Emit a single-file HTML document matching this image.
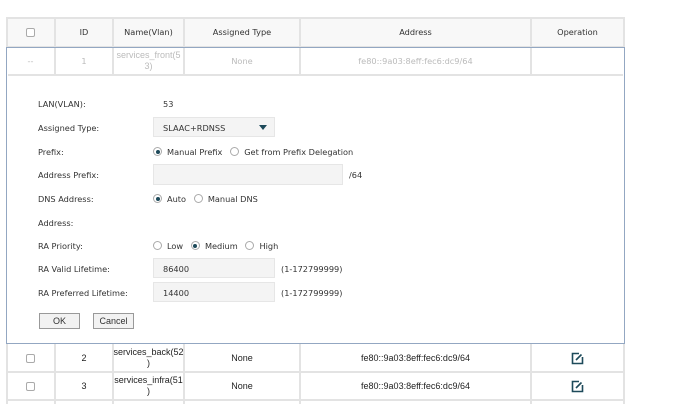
<!DOCTYPE html>
<html><head><style>
*{margin:0;padding:0;box-sizing:border-box}
body{width:690px;height:404px;background:#fff;position:relative;overflow:hidden;font-family:"DejaVu Sans",Verdana,sans-serif;font-size:8.2px;color:#333}
.a{position:absolute}
.vl{position:absolute;width:2px;background:#e3e3e3}
.hl{position:absolute;height:2px;background:#e3e3e3}
.c{position:absolute;text-align:center;display:flex;align-items:center;justify-content:center;line-height:11px}
.cb{width:9px;height:9px;border:1px solid #aaa;border-radius:2px;background:#fff}
.lab{position:absolute;left:38px}
.inp{position:absolute;background:#f4f4f4;border:1px solid #e6e6e6}
.r{display:inline-block;width:9px;height:9px;border:1px solid #aaa;border-radius:50%;vertical-align:-1px;margin-right:5px;position:relative}
.r.on:after{content:"";position:absolute;left:1.5px;top:1.5px;width:4px;height:4px;border-radius:50%;background:#1d4a5a}
.btn{position:absolute;border:1px solid #999;background:#f2f2f2;font-family:"Liberation Sans",sans-serif;font-size:9px;display:flex;align-items:center;justify-content:center}
.n{font-family:"Liberation Sans",sans-serif;font-size:9px;color:#222}
</style></head><body>
<div class="a" style="left:6px;top:18px;width:618px;height:28px;background:#f8f8f8"></div>
<div class="hl" style="left:6px;top:17px;width:619px"></div>
<div class="hl" style="left:6px;top:46px;width:619px"></div>
<div class="vl" style="left:6px;top:17px;height:30px"></div>
<div class="vl" style="left:54px;top:17px;height:59px"></div>
<div class="vl" style="left:112px;top:17px;height:59px"></div>
<div class="vl" style="left:183px;top:17px;height:59px"></div>
<div class="vl" style="left:299px;top:17px;height:59px"></div>
<div class="vl" style="left:530px;top:17px;height:59px"></div>
<div class="vl" style="left:623px;top:17px;height:30px"></div>
<div class="c" style="left:6px;top:18px;width:49px;height:28px"><div class="cb"></div></div>
<div class="c" style="left:55px;top:18px;width:58px;height:28px">ID</div>
<div class="c" style="left:113px;top:18px;width:71px;height:28px">Name(Vlan)</div>
<div class="c" style="left:184px;top:18px;width:116px;height:28px">Assigned Type</div>
<div class="c" style="left:300px;top:18px;width:231px;height:28px">Address</div>
<div class="c" style="left:531px;top:18px;width:93px;height:28px">Operation</div>
<div class="a" style="left:6px;top:47px;width:619px;height:297px;border:1.5px solid #93a7c2"></div>
<div class="hl" style="left:8px;top:74px;width:615px"></div>
<div class="c" style="left:6px;top:48px;width:49px;height:26px;color:#bbb">--</div>
<div class="c" style="left:55px;top:48px;width:58px;height:26px;color:#bbb">1</div>
<div class="c" style="left:113px;top:48px;width:71px;height:26px;color:#bbb;font-family:'Liberation Sans',sans-serif;font-size:9px">services_front(5<br>3)</div>
<div class="c" style="left:184px;top:48px;width:116px;height:26px;color:#bbb">None</div>
<div class="c" style="left:300px;top:48px;width:231px;height:26px;color:#bbb">fe80::9a03:8eff:fec6:dc9/64</div>

<div class="lab" style="top:99px">LAN(VLAN):</div><div class="a" style="left:163px;top:99px">53</div>
<div class="lab" style="top:123px">Assigned Type:</div>
<div class="inp" style="left:153px;top:117px;width:122px;height:20px"></div>
<div class="a" style="left:163px;top:123px">SLAAC+RDNSS</div>
<div class="a" style="left:259px;top:125px;width:0;height:0;border-left:4px solid transparent;border-right:4px solid transparent;border-top:5px solid #1d4a5a"></div>
<div class="lab" style="top:147px">Prefix:</div>
<div class="a" style="left:153px;top:147px"><span class="r on"></span>Manual Prefix&nbsp;&nbsp;&nbsp;<span class="r"></span>Get from Prefix Delegation</div>
<div class="lab" style="top:170px">Address Prefix:</div>
<div class="inp" style="left:153px;top:164px;width:190px;height:21px"></div>
<div class="a" style="left:349px;top:170px">/64</div>
<div class="lab" style="top:194px">DNS Address:</div>
<div class="a" style="left:153px;top:194px"><span class="r on"></span>Auto&nbsp;&nbsp;&nbsp;<span class="r"></span>Manual DNS</div>
<div class="lab" style="top:218px">Address:</div>
<div class="lab" style="top:241px">RA Priority:</div>
<div class="a" style="left:153px;top:241px"><span class="r"></span>Low&nbsp;&nbsp;&nbsp;<span class="r on"></span>Medium&nbsp;&nbsp;&nbsp;<span class="r"></span>High</div>
<div class="lab" style="top:264px">RA Valid Lifetime:</div>
<div class="inp" style="left:153px;top:258px;width:122px;height:20px"></div>
<div class="a" style="left:163px;top:264px">86400</div>
<div class="a" style="left:281px;top:264px">(1-172799999)</div>
<div class="lab" style="top:288px">RA Preferred Lifetime:</div>
<div class="inp" style="left:153px;top:282px;width:122px;height:20px"></div>
<div class="a" style="left:163px;top:288px">14400</div>
<div class="a" style="left:281px;top:288px">(1-172799999)</div>
<div class="btn" style="left:39px;top:313px;width:41px;height:16px">OK</div>
<div class="btn" style="left:93px;top:313px;width:41px;height:16px">Cancel</div>
<div class="hl" style="left:6px;top:371px;width:619px"></div>
<div class="hl" style="left:6px;top:399px;width:619px"></div>
<div class="vl" style="left:6px;top:344px;height:60px"></div>
<div class="vl" style="left:54px;top:344px;height:60px"></div>
<div class="vl" style="left:112px;top:344px;height:60px"></div>
<div class="vl" style="left:183px;top:344px;height:60px"></div>
<div class="vl" style="left:299px;top:344px;height:60px"></div>
<div class="vl" style="left:530px;top:344px;height:60px"></div>
<div class="vl" style="left:623px;top:344px;height:60px"></div>

<div class="c" style="left:6px;top:344px;width:49px;height:28px"><div class="cb"></div></div>
<div class="c n" style="left:55px;top:344px;width:58px;height:28px">2</div>
<div class="c n" style="left:113px;top:344px;width:71px;height:28px">services_back(52<br>)</div>
<div class="c n" style="left:184px;top:344px;width:116px;height:28px">None</div>
<div class="c n" style="left:300px;top:344px;width:231px;height:28px">fe80::9a03:8eff:fec6:dc9/64</div>
<div class="c" style="left:531px;top:344px;width:93px;height:28px"><svg width="13" height="13" viewBox="0 0 13 13"><path d="M8 1.5H1.5V11.5H11.5V5" fill="none" stroke="#1d4a5a" stroke-width="1.6"/><path d="M5 8L10.5 2.5" stroke="#1d4a5a" stroke-width="1.6"/></svg></div>
<div class="c" style="left:6px;top:372px;width:49px;height:28px"><div class="cb"></div></div>
<div class="c n" style="left:55px;top:372px;width:58px;height:28px">3</div>
<div class="c n" style="left:113px;top:372px;width:71px;height:28px">services_infra(51<br>)</div>
<div class="c n" style="left:184px;top:372px;width:116px;height:28px">None</div>
<div class="c n" style="left:300px;top:372px;width:231px;height:28px">fe80::9a03:8eff:fec6:dc9/64</div>
<div class="c" style="left:531px;top:372px;width:93px;height:28px"><svg width="13" height="13" viewBox="0 0 13 13"><path d="M8 1.5H1.5V11.5H11.5V5" fill="none" stroke="#1d4a5a" stroke-width="1.6"/><path d="M5 8L10.5 2.5" stroke="#1d4a5a" stroke-width="1.6"/></svg></div>
</body></html>
